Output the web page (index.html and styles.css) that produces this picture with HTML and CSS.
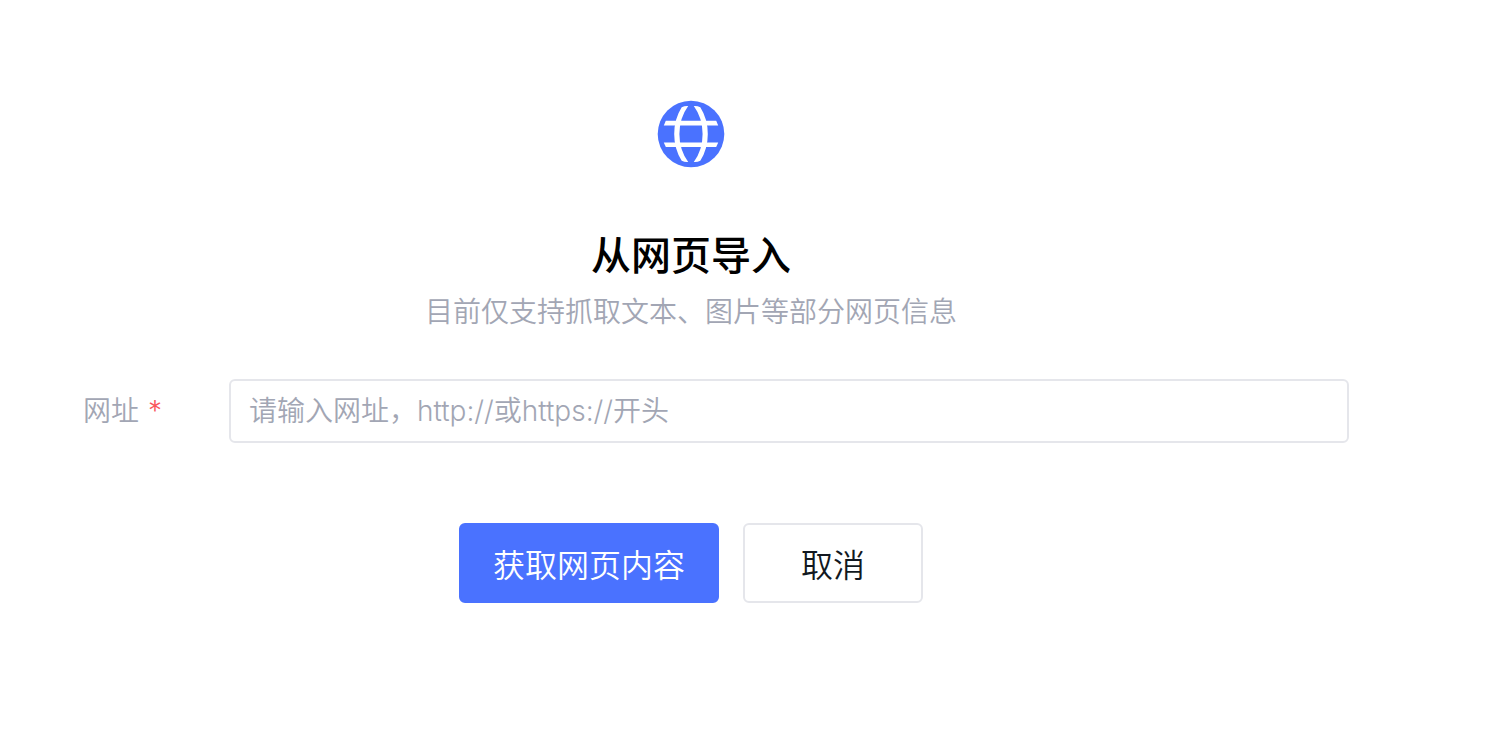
FILE: index.html
```html
<!DOCTYPE html>
<html lang="zh-CN">
<head>
<meta charset="utf-8">
<meta name="viewport" content="width=device-width, initial-scale=1">
<title>从网页导入</title>
<link rel="stylesheet" href="styles.css">
</head>
<body>
<main class="import">
  <svg class="globe" viewBox="0 0 68 68" aria-hidden="true">
    <circle cx="34" cy="34" r="33.3" fill="#4a72ff"/>
    <g fill="#fff">
      <path d="M8.8 20.8H59.2L61.2 25.4H6.8Z"/>
      <path d="M6.8 42.4H61.2L59.2 47H8.8Z"/>
      <path d="M24.7 7.2Q28 5.6 31.2 6Q22.4 18 22.4 34Q22.4 50 31.2 62Q28 62.4 24.7 60.8Q17.2 49 17.2 34Q17.2 19 24.7 7.2Z"/>
      <path d="M43.3 7.2Q40 5.6 36.8 6Q45.6 18 45.6 34Q45.6 50 36.8 62Q40 62.4 43.3 60.8Q50.8 49 50.8 34Q50.8 19 43.3 7.2Z"/>
    </g>
  </svg>
  <h1 class="title">从网页导入</h1>
  <p class="subtitle">目前仅支持抓取文本、图片等部分网页信息</p>
  <form class="form">
    <div class="field">
      <label class="label" for="url">网址<span class="required">*</span></label>
      <input class="input" id="url" type="url" required placeholder="请输入网址，http://或https://开头">
    </div>
    <div class="actions">
      <button class="button primary" type="submit">获取网页内容</button>
      <button class="button" type="button">取消</button>
    </div>
  </form>
</main>
</body>
</html>
```
FILE: styles.css
```css
* {
  box-sizing: border-box;
}

body {
  margin: 0;
  background: #fff;
  font-family: Inter, "Noto Sans CJK SC", sans-serif;
  font-weight: 350;
  color: #121820;
}

.import {
  display: flex;
  flex-direction: column;
  align-items: center;
  padding: 100px 137px 100px 33px;
}

.globe {
  width: 68px;
  height: 68px;
}

.title {
  margin: 58px 0 0;
  font-size: 40px;
  font-weight: 500;
  line-height: 60px;
  color: #000;
}

.subtitle {
  margin: 6px 0 0;
  font-size: 28px;
  line-height: 40px;
  color: #a2a6b4;
}

.form {
  width: 100%;
  margin-top: 47px;
}

.field {
  display: flex;
  align-items: center;
}

.label {
  flex: 0 0 196px;
  padding-left: 50px;
  font-size: 28px;
  line-height: 40px;
  color: #a2a6b4;
}

.required {
  margin-left: 9px;
  color: #f9565b;
}

.input {
  flex: 1;
  min-width: 0;
  height: 64px;
  padding: 0 18px;
  border: 2px solid #e5e6eb;
  border-radius: 6px;
  background: #fff;
  font: inherit;
  font-size: 28px;
  color: #121820;
}

.input::placeholder {
  color: #a2a6b4;
  opacity: 1;
}

.actions {
  display: flex;
  justify-content: center;
  gap: 24px;
  margin-top: 80px;
}

.button {
  min-width: 180px;
  height: 80px;
  padding: 0 32px;
  border: 2px solid #e5e6eb;
  border-radius: 6px;
  background: #fff;
  font: inherit;
  font-size: 32px;
  color: #121820;
}

.primary {
  border-color: #4a72ff;
  background: #4a72ff;
  color: #fff;
}
```
